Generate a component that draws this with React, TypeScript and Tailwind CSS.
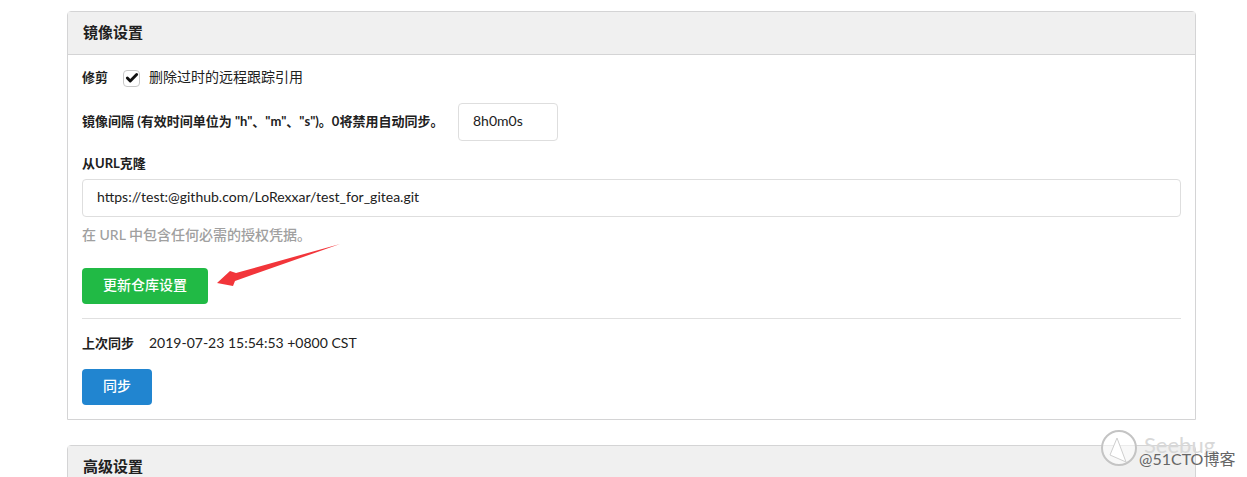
import { Check } from "lucide-react";

const FONT = "font-['Lato','Noto_Sans_CJK_SC',sans-serif]";

export default function App() {
  return (
    <div className={`relative h-[477px] w-[1247px] overflow-hidden bg-white pt-[11px] pl-[67px] text-[14px] text-[#212121] ${FONT}`}>
      {/* 镜像设置 */}
      <div className="w-[1129px] rounded-t-[4px] border border-[#d4d4d5]">
        <div className="flex h-[43px] items-center border-b border-[#d4d4d5] bg-[#f0f0f0] pb-[2px] pl-[15px] text-[15px] font-bold">
          镜像设置
        </div>
        <div className="px-[14px]">
          <div className="mt-[14px] flex h-[18px] items-center">
            <span className="w-[41px] text-[13px] font-bold">修剪</span>
            <span className="flex h-[17px] w-[17px] items-center justify-center rounded-[4px] border border-[#c8c8c8] bg-white">
              <Check size={14} strokeWidth={5} color="#111" />
            </span>
            <span className="ml-[9px] pb-[2px] text-[14px] leading-[18px]">删除过时的远程跟踪引用</span>
          </div>
          <div className="mt-[16px] flex items-center">
            <span className="w-[376px] pb-[1px] text-[13px] font-bold whitespace-nowrap">
              镜像间隔 (有效时间单位为 "h"、"m"、"s")。0将禁用自动同步。
            </span>
            <div className="flex h-[38px] w-[100px] items-center rounded-[4px] border border-[#dedede] pb-[4px] pl-[14px] text-[14px]">
              8h0m0s
            </div>
          </div>
          <div className="mt-[14px] text-[13px] leading-[16px] font-bold">从URL克隆</div>
          <div className="mt-[8px] flex h-[38px] items-center rounded-[4px] border border-[#dedede] pb-[4px] pl-[14px] text-[14px]">
            https://test:@github.com/LoRexxar/test_for_gitea.git
          </div>
          <div className="mt-[9px] text-[14px] leading-[18px] font-medium text-[#a0a0a0]">在 URL 中包含任何必需的授权凭据。</div>
          <button className="mt-[24px] flex h-[36px] w-[126px] items-center justify-center rounded-[4px] bg-[#21ba45] pb-[4px] text-[14px] font-medium text-white">
            更新仓库设置
          </button>
          <div className="mt-[14px] border-t border-[#e0e0e0]" />
          <div className="mt-[15px] flex h-[18px] items-center">
            <span className="w-[67px] pt-[2px] text-[13px] font-bold">上次同步</span>
            <span className="pb-[2px] text-[14px]">2019-07-23 15:54:53 +0800 CST</span>
          </div>
          <button className="mt-[17px] mb-[14px] flex h-[36px] w-[70px] items-center justify-center rounded-[4px] bg-[#2185d0] pb-[4px] text-[14px] font-medium text-white">
            同步
          </button>
        </div>
      </div>

      {/* 高级设置 */}
      <div className="mt-[25px] w-[1129px] rounded-t-[4px] border border-[#d4d4d5]">
        <div className="flex h-[43px] items-center bg-[#f0f0f0] pb-[2px] pl-[15px] text-[15px] font-bold">高级设置</div>
      </div>

      {/* arrow annotation */}
      <svg className="absolute top-[240px] left-[210px]" width="135" height="52" viewBox="0 0 135 52">
        <path d="M130 4 L26 33 L20 31 L7 43 L23 46 L25 41 Z" fill="#f2353a" />
      </svg>

      {/* watermark */}
      <svg className="absolute top-[428px] left-[1098px]" width="44" height="44" viewBox="0 0 44 44">
        <circle cx="21" cy="20" r="17" fill="#fff" fillOpacity="0.55" stroke="#c4c4c4" strokeWidth="2" />
        <path d="M19 10 L12 27 L28 34 Z" fill="#fff" stroke="#cfcfcf" />
      </svg>
      <div className="absolute top-[433px] left-[1144px] text-[22px] leading-[24px] text-[#d8d8d8]">Seebug</div>
      <div className="absolute top-[449px] left-[1139px] text-[16px] leading-[20px] whitespace-nowrap text-[#666]">@51CTO博客</div>
    </div>
  );
}
